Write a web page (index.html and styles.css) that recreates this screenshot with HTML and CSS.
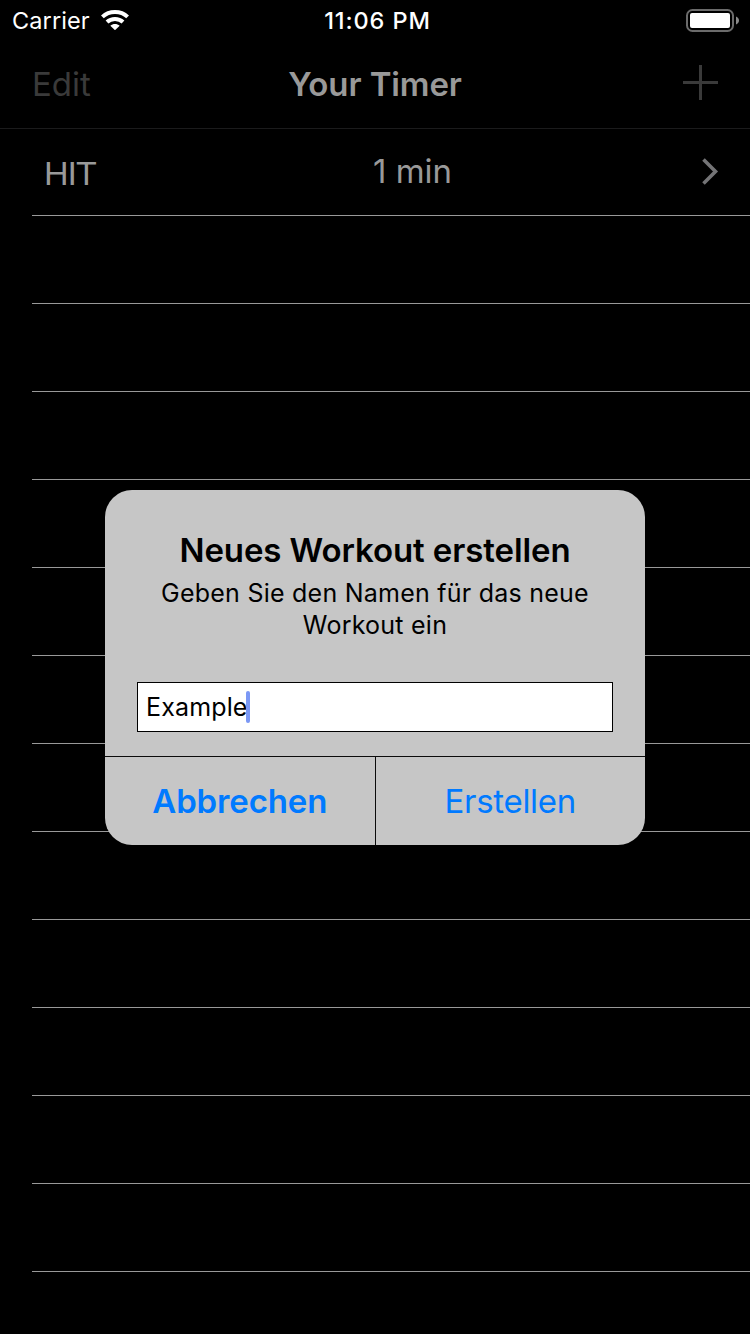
FILE: index.html
```html
<!DOCTYPE html>
<html lang="de">
<head>
<meta charset="utf-8">
<title>Your Timer</title>
<link rel="stylesheet" href="styles.css">
</head>
<body>
<div class="screen">
  <header class="status">
    <div class="status-left">
      <span class="carrier">Carrier</span>
      <svg class="wifi" width="28" height="20" viewBox="0 0 28 20" fill="none" stroke="#fff" stroke-width="4">
        <path d="M1.400 6.900C8.200 .4 19.800 .4 26.600 6.900"/>
        <path d="M6 12C10.300 7.900 17.700 7.900 22 12"/>
        <path d="M9.300 15.800C12 13.300 16 13.300 18.700 15.800L14 20.200Z" fill="#fff" stroke="none"/>
      </svg>
    </div>
    <span class="clock">11:06 PM</span>
    <svg class="battery" width="54" height="24" viewBox="0 0 54 24">
      <rect x="1" y="1" width="46" height="21" rx="5.500" fill="none" stroke="#6b6b6b" stroke-width="2"/>
      <rect x="4" y="4" width="40" height="15" rx="2" fill="#fff"/>
      <path d="M50 7.500C54 9 54 14 50 15.500Z" fill="#8a8a8a"/>
    </svg>
  </header>
  <nav class="nav">
    <span class="edit">Edit</span>
    <h1 class="nav-title">Your Timer</h1>
    <svg class="plus" width="35" height="35" viewBox="0 0 35 35"><path d="M17.500 0V35M0 17.500H35" stroke="#3a3a3a" stroke-width="3"/></svg>
  </nav>
  <ul class="list">
    <li class="row first">
      <span class="name">HIT</span>
      <span class="duration">1 min</span>
      <svg class="chevron" width="17" height="27" viewBox="0 0 17 27" fill="none" stroke="#747476" stroke-width="3.600"><path d="M1.500 1.500L13.500 13.500L1.500 25.500"/></svg>
    </li>
    <li class="row"></li><li class="row"></li><li class="row"></li><li class="row"></li>
    <li class="row"></li><li class="row"></li><li class="row"></li><li class="row"></li>
    <li class="row"></li><li class="row"></li><li class="row"></li><li class="row"></li>
  </ul>
  <div class="overlay">
    <section class="alert">
      <div class="alert-body">
        <h2 class="alert-title">Neues Workout erstellen</h2>
        <p class="message">Geben Sie den Namen für das neue<br>Workout ein</p>
        <div class="field"><span class="value">Example</span><span class="caret"></span></div>
      </div>
      <div class="actions">
        <div class="action cancel">Abbrechen</div>
        <div class="action create">Erstellen</div>
      </div>
    </section>
  </div>
</div>
</body>
</html>
```
FILE: styles.css
```css
* { box-sizing: border-box; margin: 0; padding: 0; }
body { background: #000; font-family: Inter, "Liberation Sans", sans-serif; }
.screen { position: relative; width: 750px; height: 1334px; overflow: hidden; background: #000; }
.status { display: grid; grid-template-columns: 1fr auto 1fr; height: 41px; align-items: center; padding: 0 10px 0 12px; color: #fff; font-size: 23.5px; line-height: 41px; }
.status-left { display: flex; align-items: center; gap: 11px; }
.carrier { letter-spacing: 0.1px; }
.wifi { margin-top: -1px; }
.clock { font-weight: 550; letter-spacing: 0.9px; padding-left: 3px; white-space: nowrap; }
.battery { justify-self: end; }
.nav { display: grid; grid-template-columns: 1fr auto 1fr; align-items: center; height: 88px; padding: 0 32px; border-bottom: 1px solid #1b1b1c; font-size: 33px; line-height: 85px; }
.edit { color: #3a3a3a; margin-top: -1px; }
.nav-title { font-size: 33px; font-weight: 600; color: #999; letter-spacing: -0.1px; margin-top: -1px; white-space: nowrap; }
.plus { justify-self: end; margin-top: -5px; }
.list { list-style: none; }
.row { height: 88px; border-bottom: 1px solid #999; margin-left: 32px; }
.first { display: grid; grid-template-columns: 341px auto 1fr; align-items: center; height: 87px; padding: 0 31px 0 12px; color: #999; font-size: 33px; }
.name { font-family: "Liberation Sans", Arial, sans-serif; font-size: 34px; letter-spacing: -1px; padding-top: 3px; }
.duration { margin-top: -2px; margin-left: -12px; white-space: nowrap; }
.chevron { justify-self: end; margin-top: -2px; }
.overlay { position: absolute; inset: 0; display: flex; justify-content: center; align-items: flex-start; padding-top: 490px; }
.alert { width: 540px; height: 355px; border-radius: 27px; background: #c6c6c6; overflow: hidden; color: #000; }
.alert-body { height: 266px; padding: 38px 32px 0; text-align: center; }
.alert-title { font-size: 33px; line-height: 44px; font-weight: 600; letter-spacing: -0.1px; white-space: nowrap; }
.message { margin-top: 5px; font-size: 25px; line-height: 32px; letter-spacing: 0.24px; white-space: nowrap; }
.field { display: flex; align-items: center; height: 50px; margin-top: 41px; padding-left: 8px; border: 1px solid #000; background: #fff; font-size: 25px; }
.value { letter-spacing: 0.15px; }
.caret { width: 4px; height: 32px; border-radius: 2px; background: #7b98f5; margin-left: -2px; }
.actions { display: flex; height: 89px; border-top: 1px solid #0b0b0b; color: #007aff; font-size: 33px; line-height: 88px; text-align: center; }
.action { flex: 1; letter-spacing: -0.15px; }
.cancel { font-weight: 600; }
.create { border-left: 1px solid #0b0b0b; letter-spacing: -0.3px; }
```
